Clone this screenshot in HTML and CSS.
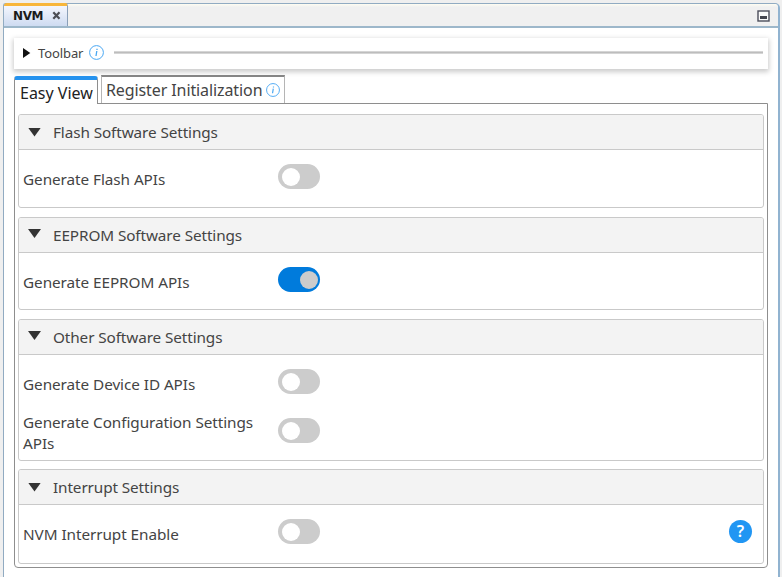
FILE: index.html
```
<!DOCTYPE html>
<html lang="en">
<head>
<meta charset="utf-8">
<title>NVM</title>
<link rel="stylesheet" href="styles.css">
</head>
<body>
<div class="window">
  <header class="titlebar">
    <div class="file-tab"><span class="file-name">NVM</span>
      <svg class="close" width="9" height="9" viewBox="0 0 9 9"><path d="M1.3 1.2l6.2 6.6M7.5 1.2L1.3 7.8" stroke="#4c4e55" stroke-width="2.2"/></svg>
    </div>
    <svg class="minimize" width="13" height="12" viewBox="0 0 13 12"><rect x="1" y="1" width="11" height="10" fill="#fafafa" stroke="#4b4d5b" stroke-width="1.4"/><rect x="3" y="6" width="7" height="3" fill="#44464f"/></svg>
  </header>
  <main class="content">
    <div class="toolbar">
      <svg class="arrow-right" width="8" height="10" viewBox="0 0 8 10"><path d="M0 0l7.3 5L0 10z" fill="#111"/></svg>
      <span class="toolbar-label">Toolbar</span>
      <svg class="info" width="15" height="15" viewBox="0 0 15 15"><circle cx="7.5" cy="7.5" r="6.9" fill="none" stroke="#49a7f3" stroke-width="1"/><path d="M7.8 6L7 11M8 3.7v1.2" stroke="#49a7f3" stroke-width="1.3"/></svg>
      <span class="rule"></span>
    </div>
    <nav class="tabs">
      <div class="tab active"><span class="t-easy">Easy View</span></div>
      <div class="tab"><span class="t-reg">Register Initialization</span>
        <svg class="info" width="14" height="14" viewBox="0 0 15 15"><circle cx="7.5" cy="7.5" r="6.9" fill="none" stroke="#49a7f3" stroke-width="1"/><path d="M7.8 6L7 11M8 3.7v1.2" stroke="#49a7f3" stroke-width="1.3"/></svg>
      </div>
    </nav>
    <div class="panel">
      <section class="card first">
        <h2><span class="caret"></span><span>Flash Software Settings</span></h2>
        <div class="row"><span class="label">Generate Flash APIs</span><span class="switch"></span></div>
      </section>
      <section class="card second">
        <h2><span class="caret"></span><span>EEPROM Software Settings</span></h2>
        <div class="row"><span class="label">Generate EEPROM APIs</span><span class="switch on"></span></div>
      </section>
      <section class="card third">
        <h2><span class="caret"></span><span>Other Software Settings</span></h2>
        <div class="row"><span class="label">Generate Device ID APIs</span><span class="switch"></span></div>
        <div class="row double"><span class="label">Generate Configuration Settings<br>APIs</span><span class="switch"></span></div>
      </section>
      <section class="card fourth">
        <h2><span class="caret"></span><span>Interrupt Settings</span></h2>
        <div class="row"><span class="label">NVM Interrupt Enable</span><span class="switch"></span><span class="help">?</span></div>
      </section>
    </div>
  </main>
</div>
</body>
</html>
```
FILE: styles.css
```
* { box-sizing: border-box; }
body {
  margin: 0;
  height: 577px;
  overflow: hidden;
  background: #efefef;
  font-family: "Noto Sans", "Open Sans", sans-serif;
  color: #444;
}
svg { display: block; flex: none; }
.window {
  margin: 3px 2px 0 3px;
  height: 590px;
  border: 1px solid #91abc2;
  border-right: 2px solid #91b3d0;
  border-radius: 3px 5px 0 0;
  background: #fff;
}
.titlebar {
  height: 24px;
  display: flex;
  justify-content: space-between;
  border-bottom: 2px solid #9db7ca;
  border-radius: 3px 4px 0 0;
  background: linear-gradient(#fffdf2, #f0f0f0 3px);
}
.file-tab {
  width: 64px;
  height: 23px;
  margin-top: -1px;
  padding-left: 9px;
  display: flex;
  align-items: center;
  gap: 9px;
  border-top: 3px solid #f8b63b;
  border-right: 1px solid #8a9fb8;
  border-radius: 3px 3px 0 0;
  background: linear-gradient(#f4f6fd, #cedbf1);
}
.close { margin-top: -1px; }
.file-name {
  width: 30px;
  margin-top: -1px;
  font: bold 12px/16px "DejaVu Sans", sans-serif;
  letter-spacing: -0.4px;
  color: #1a1a1a;
}
.minimize { margin: 6px 8px 0 0; }
.content { padding: 10px 10px 0 10px; }
.toolbar {
  height: 31px;
  display: flex;
  align-items: center;
  padding: 0 5px 2px 9px;
  background: #fff;
  box-shadow: 0 2px 5px 1px #ccc;
}
.toolbar-label {
  width: 45px;
  margin: 0 6px 0 7px;
  font-size: 13px;
  letter-spacing: -0.1px;
  line-height: 18px;
  white-space: nowrap;
}
.rule { flex: 1; height: 3px; margin-left: 10px; background: #bdbdbd; border: solid #d5d5d5; border-width: 1px 0; }
.tabs { height: 28px; margin-top: 6px; display: flex; align-items: flex-start; gap: 3px; }
.tab {
  width: 184px;
  height: 28px;
  display: flex;
  align-items: center;
  gap: 4px;
  padding-left: 4px;
  border: 1px solid #b5b5b5;
  border-top: 2px solid #858585;
  border-bottom: 0;
  font-size: 16px;
  letter-spacing: -0.1px;
  line-height: 22px;
  white-space: nowrap;
}
.tab.active {
  width: 84px;
  height: 28px;
  margin-top: 1px;
  padding: 1px 0 0 5px;
  border: 1px solid #8e8e8e;
  border-top: 4px solid #2592ee;
  border-bottom: 0;
  border-radius: 3px 3px 0 0;
  background: #fff;
  color: #222;
  z-index: 1;
}
.t-easy { width: 74px; letter-spacing: 0; }
.t-reg { width: 156px; }
.panel {
  height: 465px;
  padding: 10px 3px;
  border: 1px solid #8e8e8e;
  border-radius: 0 0 4px 4px;
}
.card {
  height: 94px;
  border: 1px solid #c9c9c9;
  border-radius: 3px;
  overflow: hidden;
}
.second { height: 93px; margin-top: 9px; }
.third { height: 142px; margin-top: 9px; }
.fourth { height: 95px; margin-top: 8px; }
h2 {
  margin: 0;
  height: 35px;
  display: flex;
  align-items: center;
  gap: 12px;
  padding: 0 0 1px 9px;
  border-bottom: 1px solid #c9c9c9;
  background: #f3f3f3;
  font-size: 15.3px;
  letter-spacing: -0.1px;
  font-weight: 400;
  line-height: 20px;
}
.caret {
  width: 13px;
  height: 9px;
  margin-top: -2px;
  background: #333;
  clip-path: polygon(0 0, 100% 0, 50% 100%);
}
.first .caret, .fourth .caret { margin-top: 1px; }
.row { height: 57px; display: flex; padding-left: 5px; font-size: 15.3px; letter-spacing: -0.06px; line-height: 21px; }
.label { width: 254px; padding-top: 19px; margin-left: -1px; margin-right: 1px; white-space: nowrap; }
.switch {
  width: 42px;
  height: 25px;
  margin-top: 14px;
  padding: 4px;
  border-radius: 13px;
  background: #ccc;
}
.switch::before { content: ""; display: block; width: 18px; height: 18px; border-radius: 50%; background: #fff; }
.on { background: #007bdc; }
.on::before { margin-left: 18px; background: #ccc; }
.double .label { padding-top: 0; }
.double .switch { margin-top: 6px; }
.help {
  width: 23px;
  height: 23px;
  margin: 15px 11px 0 auto;
  border-radius: 50%;
  background: #2196f3;
  color: #fff;
  font-size: 16px;
  line-height: 23px;
  font-weight: 600;
  text-align: center;
}
```
